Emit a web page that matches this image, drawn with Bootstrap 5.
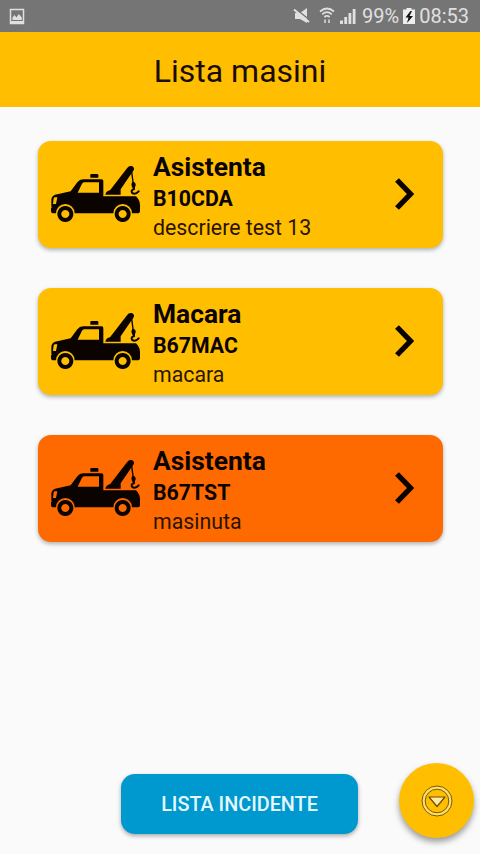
<!DOCTYPE html>
<html lang="ro">
<head>
<meta charset="utf-8">
<meta name="viewport" content="width=device-width, initial-scale=1">
<title>Lista masini</title>
<link href="https://cdn.jsdelivr.net/npm/bootstrap@5.3.0/dist/css/bootstrap.min.css" rel="stylesheet">
<style>
  body { font-family: Roboto, sans-serif; background: #fafafa; color: #0a0300; }
  .screen { height: 854px; width: 480px; }
  .status-bar { height: 32px; background: #757575; color: #e0e0e0; font-size: 20px; line-height: 32px; padding: 0 11px 0 9px; }
  .battery-level { margin-left: 6px; }
  .title-bar { height: 75px; background: #ffbf00; font-size: 32px; line-height: 78px; color: #1a0c00; }
  .vehicles { padding: 33.500px 37.500px 0 37.500px; gap: 40px; }
  .vehicle { --bs-card-border-width: 0; --bs-card-border-radius: 13px; --bs-card-bg: #ffbf00; height: 107px; width: 405px; padding: 10px 29px 0 6.500px; box-shadow: 0 2px 4px rgba(0,0,0,.3); }
  .vehicle-busy { --bs-card-bg: #ff6a00; }
  .truck { margin-top: 9.500px; width: 104px; height: 68px; }
  .info { margin-left: 5px; white-space: nowrap; }
  .kind { font-size: 26.400px; line-height: 32px; }
  .plate { font-size: 21.300px; line-height: 31px; }
  .descr { font-size: 21.300px; line-height: 28px; color: #2a1400; }
  .chev { margin-top: 26px; }
  .foot { padding: 0 6px 15px 121px; }
  .btn-incidents { --bs-btn-padding-x: 0; --bs-btn-padding-y: 0; --bs-btn-bg: #0099cf; --bs-btn-color: #e4f8ff; --bs-btn-hover-bg: #008abb; --bs-btn-hover-color: #fff; --bs-btn-border-width: 0; --bs-btn-border-radius: 14px; --bs-btn-font-size: 19.800px; --bs-btn-font-weight: 500; width: 237px; height: 60px; margin-bottom: 5px; padding-top: 2px; box-shadow: 0 2px 4px rgba(0,0,0,.33); }
  .fab { --bs-btn-bg: #ffbf00; --bs-btn-hover-bg: #f0b300; --bs-btn-border-width: 0; width: 75px; height: 75px; margin-bottom: 1px; box-shadow: 0 4px 6px rgba(0,0,0,.38); }
</style>
</head>
<body>
<svg class="d-none" xmlns="http://www.w3.org/2000/svg">
  <symbol id="truck" viewBox="0 0 312 204">
    <path d="M142 42h18q3 0 3 4v7h-24v-7q0-4 3-4z"/>
    <path fill-rule="evenodd" d="M22 118q2-11 11-14l47-10 20-27q7-9 17-9h56q5 0 5 5v46h98q12 12 12 25v18q0 8-8 8h-16a28 28 0 0 0-56 0H92a28 28 0 0 0-56 0h-7q-8 0-8-7v-9h4q-4 0-3-6zM101 98h64V67h-43q-5 0-8 4zM29 115l-2 17h9l4-20h-7q-3 0-4 3z"/>
    <path fill-rule="evenodd" d="M64 138a24 24 0 1 0 .1 0zM64 150a12 12 0 1 1-.1 0zM236 138a24 24 0 1 0 .1 0zM236 150a12 12 0 1 1-.1 0z"/>
    <path d="M184 104q2-11 14-13l51-66q5-9 15-7 9 5 5 13l-39 57v16z"/>
    <path d="M264 27l5 38q9 5 5 14l-3 6h-5l-3-7q-2-7 2-13l-5-35z"/>
    <path fill="none" stroke="currentColor" stroke-width="6" stroke-linecap="round" d="M270 82v5q-10 4-6 11 9 8 20-4"/>
  </symbol>
  <symbol id="chevron" viewBox="0 0 20 34"><path fill="none" stroke="currentColor" stroke-width="5.400" d="M3 3l13.500 14L3 31"/></symbol>
</svg>

<div class="screen d-flex flex-column overflow-hidden">
  <div class="status-bar d-flex align-items-center">
    <svg width="16" height="17" viewBox="0 0 16 17" class="me-auto"><path fill="none" stroke="#e0e0e0" stroke-width="1.500" d="M1.500 1.500h13v14h-13z"/><path fill="#e0e0e0" d="M3.500 12V9.500L5.500 7l2 2.500L9.800 6l3 3.500V12zM1 13h14v3H1z"/></svg>
    <svg width="18" height="18" viewBox="0 0 18 18" fill="#e0e0e0"><path d="M2 6h5L14 1v15l-7-4H2z"/><path d="M2 1.500L18 14" stroke="#757575" stroke-width="1.500"/><path d="M1 2.500l15 12.500" stroke="#e0e0e0" stroke-width="2"/></svg>
    <svg class="ms-2" width="16" height="18" viewBox="0 0 16 18" fill="none" stroke="#e0e0e0" stroke-width="1.700"><path d="M1 4.500q7-6 14 0M3.200 7.300q4.800-4.200 9.600 0M5.400 10q2.600-2.200 5.200 0"/><path stroke-width="2" d="M6 12.500V16M10 12.500V16" opacity=".75"/></svg>
    <svg class="ms-1" width="17" height="17" viewBox="0 0 17 17" fill="#e0e0e0"><path d="M1 12.500h3V16H1zM5.300 9h2.800v7H5.300zM9.500 5h2.800v11H9.500zM13.700 1h2.800v15h-2.800z"/></svg>
    <span class="battery-level">99%</span>
    <svg class="ms-1" width="12" height="17" viewBox="0 0 12 17"><path fill="#eee" d="M3.500 0h5v1.500H12V16H0V1.500h3.500z"/><path d="M7.500 3L2.500 9.500h3L4 15l6-7H6.500L9 3z" fill="#111"/></svg>
    <span class="ms-1">08:53</span>
  </div>
  <header class="title-bar text-center">Lista masini</header>

  <main class="vehicles d-flex flex-column flex-grow-1">
    <div class="card vehicle flex-row align-items-start">
      <svg class="truck flex-shrink-0" fill="currentColor"><use href="#truck"/></svg>
      <div class="info flex-grow-1"><div class="kind fw-bold">Asistenta</div><div class="plate fw-bold">B10CDA</div><div class="descr">descriere test 13</div></div>
      <svg class="chev" width="20" height="34"><use href="#chevron"/></svg>
    </div>
    <div class="card vehicle flex-row align-items-start">
      <svg class="truck flex-shrink-0" fill="currentColor"><use href="#truck"/></svg>
      <div class="info flex-grow-1"><div class="kind fw-bold">Macara</div><div class="plate fw-bold">B67MAC</div><div class="descr">macara</div></div>
      <svg class="chev" width="20" height="34"><use href="#chevron"/></svg>
    </div>
    <div class="card vehicle vehicle-busy flex-row align-items-start">
      <svg class="truck flex-shrink-0" fill="currentColor"><use href="#truck"/></svg>
      <div class="info flex-grow-1"><div class="kind fw-bold">Asistenta</div><div class="plate fw-bold">B67TST</div><div class="descr">masinuta</div></div>
      <svg class="chev" width="20" height="34"><use href="#chevron"/></svg>
    </div>
  </main>

  <footer class="foot d-flex align-items-end justify-content-between">
    <button type="button" class="btn btn-incidents text-nowrap">LISTA INCIDENTE</button>
    <button type="button" class="btn fab rounded-circle p-0 d-flex align-items-center justify-content-center" aria-label="Meniu">
      <svg width="32" height="32" viewBox="0 0 32 32" fill="none"><circle cx="16" cy="16" r="13.500" stroke="#ffdf70" stroke-width="3"/><circle cx="16" cy="16" r="15" stroke="#7a5a00"/><circle cx="16" cy="16" r="11.800" stroke="#7a5a00"/><path d="M8 12h16l-8 9.500z" fill="#ffe9a0" stroke="#6b4c00" stroke-width="1.200" stroke-linejoin="round"/></svg>
    </button>
  </footer>
</div>
<script src="https://cdn.jsdelivr.net/npm/bootstrap@5.3.0/dist/js/bootstrap.bundle.min.js"></script>
</body>
</html>
